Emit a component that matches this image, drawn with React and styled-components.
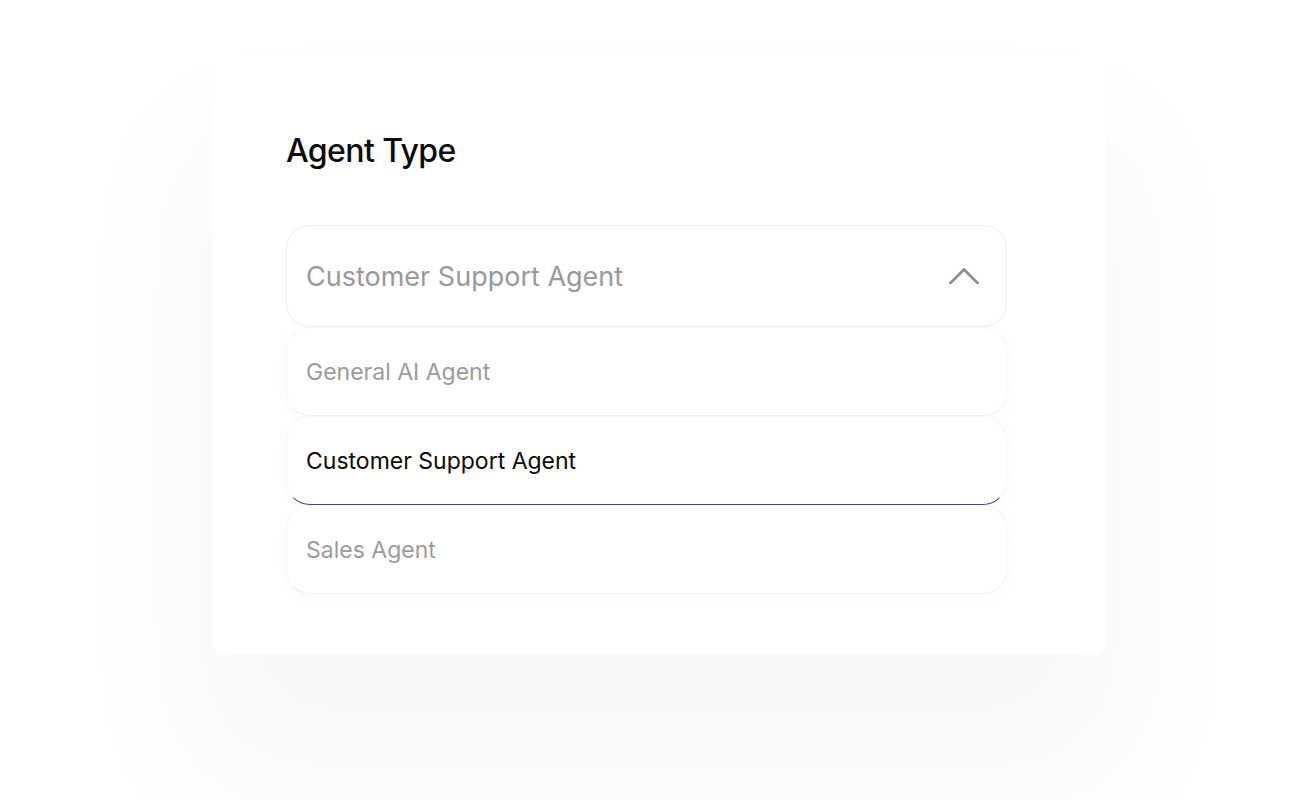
import React, { useState } from "react";
import styled, { createGlobalStyle } from "styled-components";

const GlobalStyle = createGlobalStyle`
  body {
    margin: 0;
    background: #ffffff;
    font-family: Inter, "Noto Sans", sans-serif;
  }
`;

const agentTypes = ["General AI Agent", "Customer Support Agent", "Sales Agent"];

//chevron drawn to match the thin grey caret
const Chevron = () => (
  <svg width="30" height="18" viewBox="0 0 30 18" fill="none">
    <path
      d="M1.5 16 L15 2.5 L28.5 16"
      stroke="#8c8c8c"
      strokeWidth="2.6"
      strokeLinecap="round"
      strokeLinejoin="round"
    />
  </svg>
);

const App = () => {
  const [selected, setSelected] = useState("Customer Support Agent");
  return (
    <>
      <GlobalStyle />
      <Page>
        <Card>
          <Title>Agent Type</Title>
          <Field>
            <Trigger>
              <TriggerText>{selected}</TriggerText>
              <Chevron />
            </Trigger>
            <Options>
              {agentTypes.map((type) => (
                <Option
                  key={type}
                  $active={type === selected}
                  onClick={() => setSelected(type)}
                >
                  {type}
                </Option>
              ))}
            </Options>
          </Field>
        </Card>
      </Page>
    </>
  );
};

const Page = styled.div`
  min-height: 800px;
  display: flex;
  justify-content: center;
  padding: 56px 0 0 4px;
  box-sizing: border-box;
  overflow: hidden;
`;

const Card = styled.div`
  width: 894px;
  box-sizing: border-box;
  padding: 75px 99px 61px 74px;
  background: #ffffff;
  border-radius: 12px;
  box-shadow: 0 100px 140px 30px rgba(0, 0, 0, 0.03);
  align-self: flex-start;
`;

const Title = styled.h2`
  margin: 0 0 55px;
  font-size: 32px;
  font-weight: 500;
  color: #0b0b0b;
  letter-spacing: -0.6px;
`;

const Field = styled.div`
  display: flex;
  flex-direction: column;
`;

const Trigger = styled.div`
  height: 102px;
  box-sizing: border-box;
  display: flex;
  align-items: center;
  justify-content: space-between;
  padding: 0 27px 0 19px;
  border: 1px solid #eeeeee;
  border-radius: 24px;
  background: #ffffff;
`;

const TriggerText = styled.span`
  font-size: 27px;
  color: #999999;
`;

const Options = styled.div`
  display: flex;
  flex-direction: column;
`;

const Option = styled.div`
  height: 89px;
  box-sizing: border-box;
  display: flex;
  align-items: center;
  padding: 0 19px;
  font-size: 23px;
  color: ${(p) => (p.$active ? "#0a0a0a" : "#9b9b9b")};
  background: #ffffff;
  border-radius: 24px;
  border: 1px solid #f5f5f5;
  border-bottom: 1px solid ${(p) => (p.$active ? "#3f4a9c" : "#efefef")};
  box-shadow: 0 3px 14px rgba(0, 0, 0, 0.025);
  cursor: pointer;
`;

export default App;
